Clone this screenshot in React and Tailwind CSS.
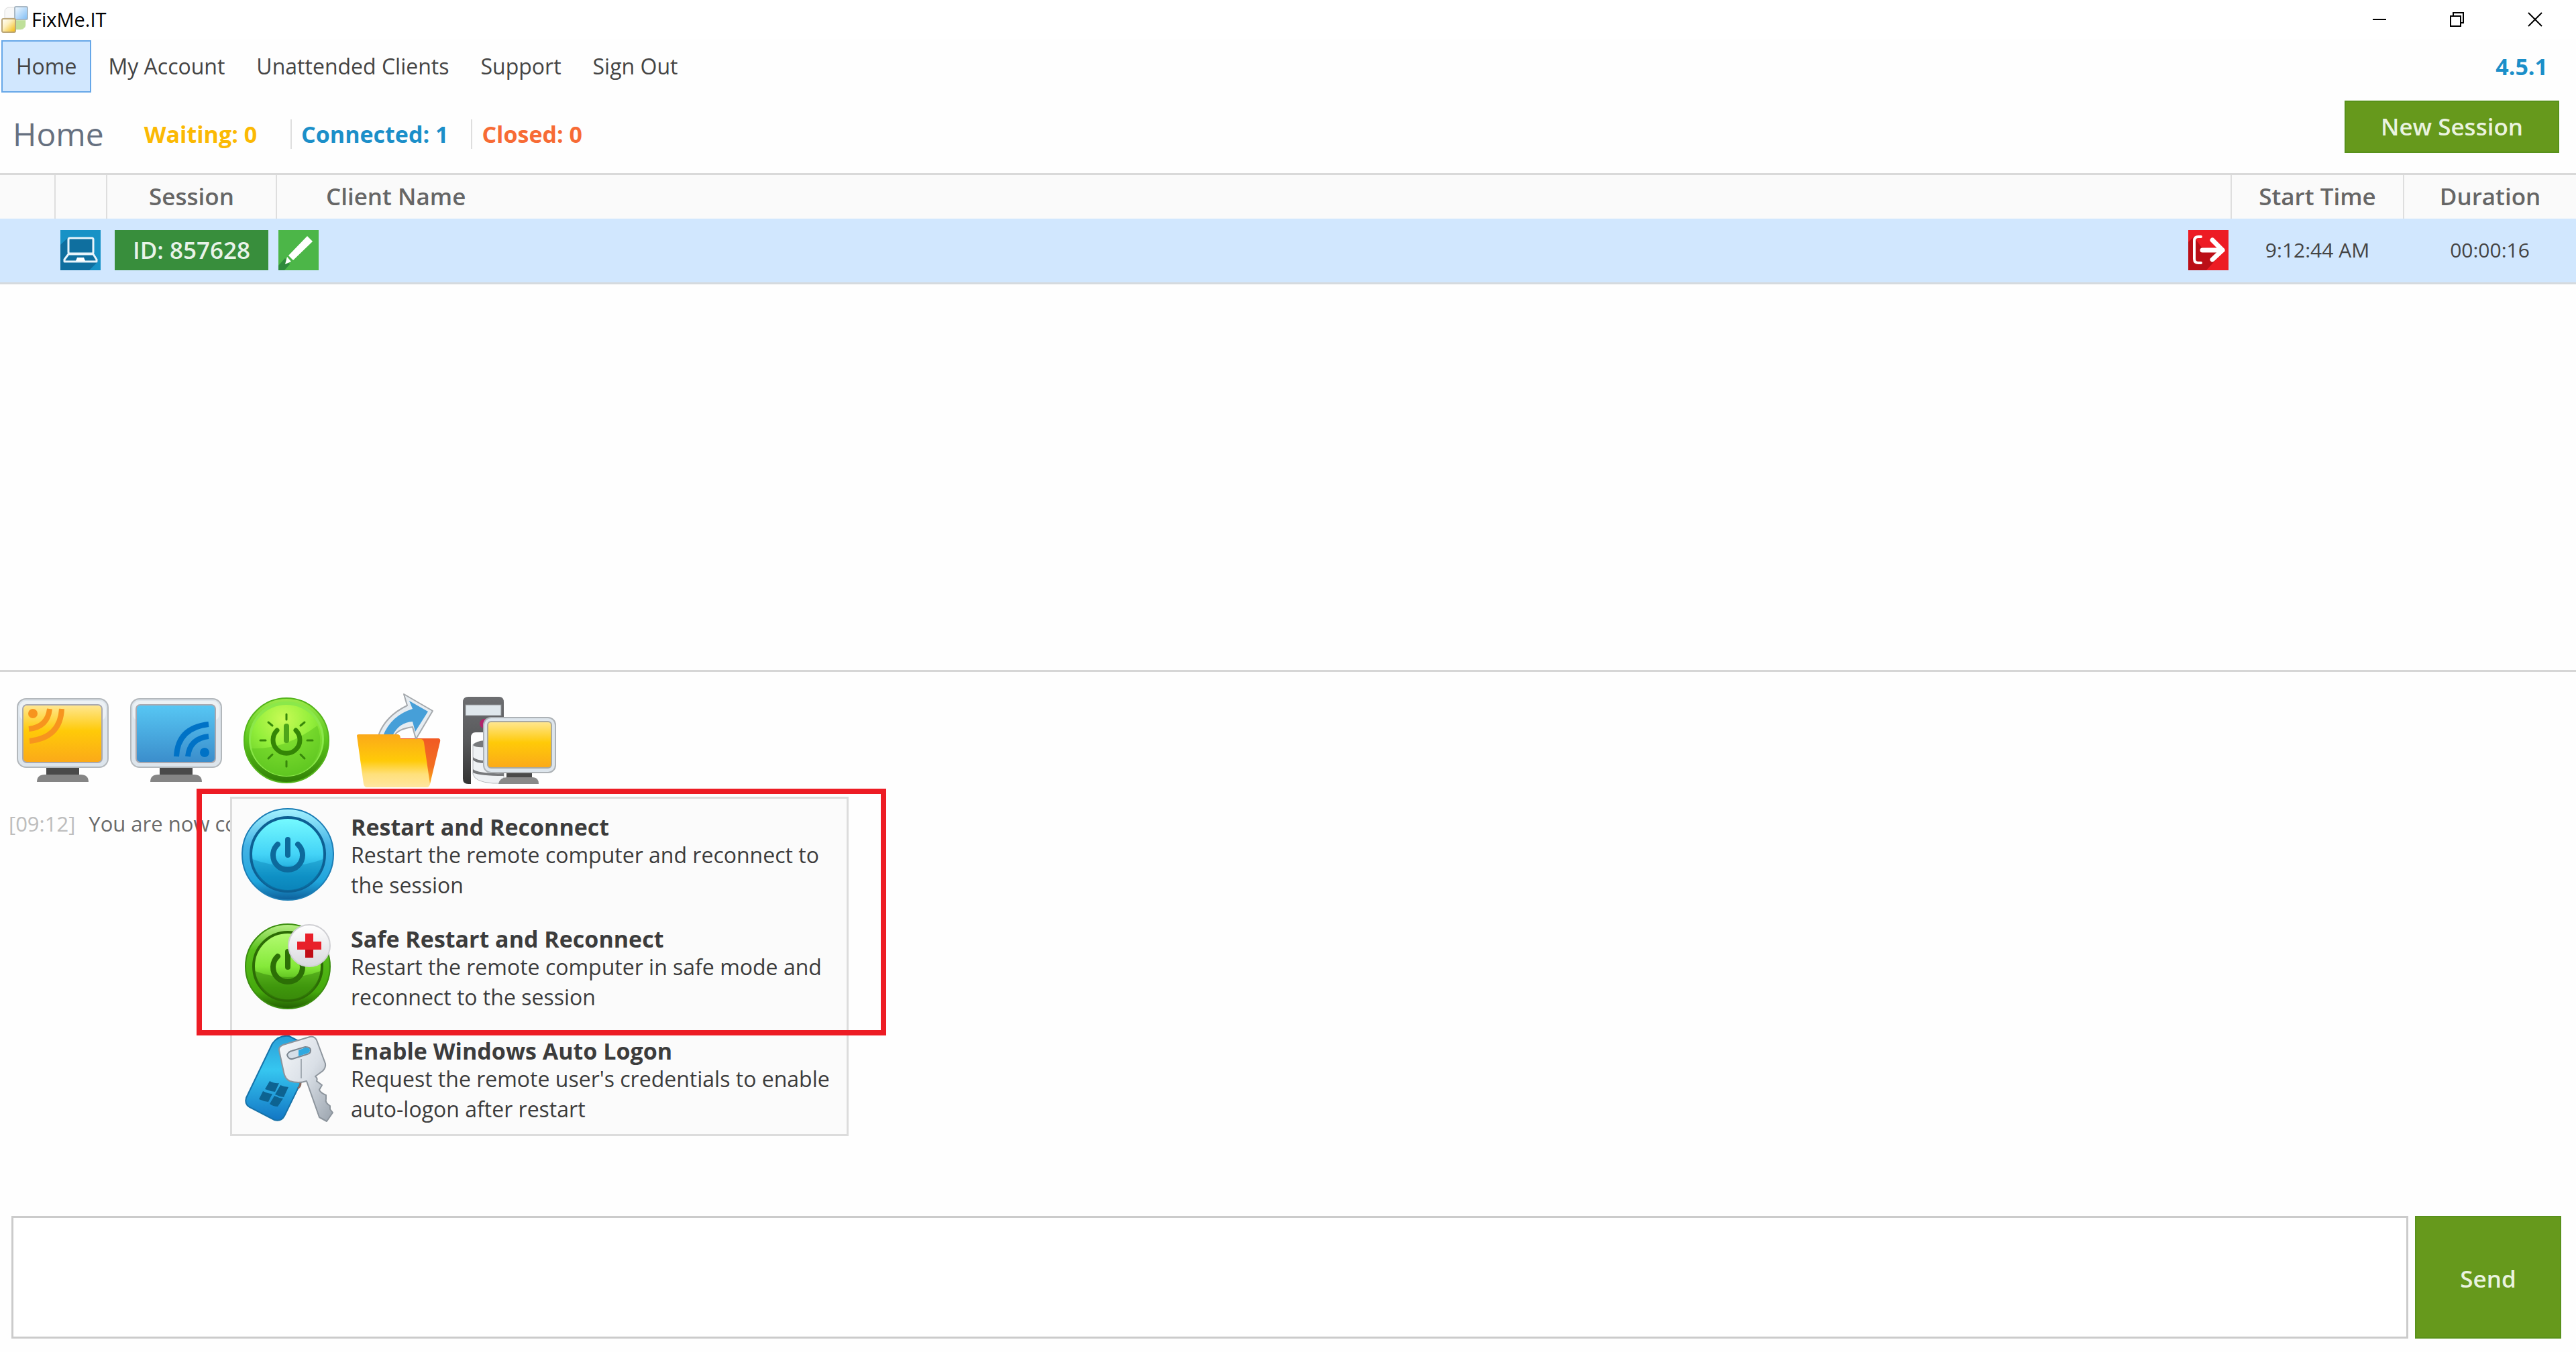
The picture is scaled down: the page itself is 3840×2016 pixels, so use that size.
import { useState } from 'react'

const menuItems = ['Home', 'My Account', 'Unattended Clients', 'Support', 'Sign Out']

const restartOptions = [
  {
    title: 'Restart and Reconnect',
    text: 'Restart the remote computer and reconnect to the session',
    icon: BluePowerIcon,
  },
  {
    title: 'Safe Restart and Reconnect',
    text: 'Restart the remote computer in safe mode and reconnect to the session',
    icon: SafePowerIcon,
  },
  {
    title: 'Enable Windows Auto Logon',
    text: "Request the remote user's credentials to enable auto-logon after restart",
    icon: KeysIcon,
  },
]

function Gradient({ id, stops, x2 = 0, y2 = 1 }) {
  return (
    <linearGradient id={id} x1="0" y1="0" x2={x2} y2={y2}>
      {stops.map(([offset, color]) => (
        <stop key={offset} offset={offset} stopColor={color} />
      ))}
    </linearGradient>
  )
}

function AppLogo() {
  return (
    <svg viewBox="0 0 40 40" className="size-10">
      <defs>
        <Gradient id="logoBlue" x2={1} stops={[[0, '#f4faff'], [1, '#7fbdf5']]} />
        <Gradient id="logoYellow" x2={1} stops={[[0, '#ffffff'], [0.4, '#fdf0c0'], [1, '#f3b705']]} />
      </defs>
      <path d="M5 18V8q0-5 6-6h9v16z" fill="#f8f8f8" stroke="#dcdcdc" />
      <path d="M21 21h15v8q-1 5-7 6h-8z" fill="#bfe09a" stroke="#d5e8c0" />
      <rect x="20" y="1" width="19" height="19" rx="2" fill="url(#logoBlue)" stroke="#a9b8c4" strokeWidth="2" />
      <rect x="1" y="19" width="20" height="20" rx="2" fill="url(#logoYellow)" stroke="#bba678" strokeWidth="2" />
    </svg>
  )
}

function LaptopIcon() {
  return (
    <svg viewBox="0 0 60 60" className="size-[60px]">
      <rect width="60" height="60" fill="#1792c6" />
      <path d="M0 22L12 11h36v20l8 16-13 13H0z" fill="#0f6f9f" />
      <rect x="12" y="12" width="37" height="23" rx="2" fill="#0f6f9f" stroke="#e9f5fb" strokeWidth="3" />
      <path d="M12 36L6 44v3h48v-3l-5-8z" fill="none" stroke="#e9f5fb" strokeWidth="3" strokeLinejoin="round" />
      <path d="M25 41h10l2 5H23z" fill="#fff" />
    </svg>
  )
}

function PencilIcon() {
  return (
    <svg viewBox="0 0 60 60" className="size-[60px]">
      <rect width="60" height="60" fill="#4cb648" />
      <path d="M10 42L0 53v7h9l8-9z" fill="#2e8b3c" />
      <path d="M43 9l8 8-29 28-7-7z" fill="#fff" />
      <path d="M13 40l6 7-9 4z" fill="#fff" />
    </svg>
  )
}

function ExitIcon() {
  return (
    <svg viewBox="0 0 60 60" className="size-[60px]">
      <rect width="60" height="60" fill="#ed1c24" />
      <path d="M0 18L8 10l12 16 34 4-27 30H0z" fill="#bb0f17" />
      <path d="M19 10h-4q-6 0-6 6v27q0 6 6 6h4" fill="none" stroke="#fff" strokeWidth="4" strokeLinecap="round" />
      <path d="M21 30h30M36 15l15 15-15 14" fill="none" stroke="#fff" strokeWidth="7" strokeLinecap="round" strokeLinejoin="round" />
    </svg>
  )
}

// Screen with its bezel and stand, shared by the toolbar icons
function Monitor({ fill }) {
  return (
    <>
      <path d="M44 103h49v13H44z" fill="#4a4a4a" />
      <path d="M30 125q0-11 12-11h53q12 0 12 11z" fill="#858585" />
      <rect x="1" y="1" width="135" height="102" rx="13" fill="#dde5ec" stroke="#b3b8bc" strokeWidth="2" />
      <rect x="4" y="4" width="129" height="30" rx="10" fill="#f7f9fa" opacity="0.6" />
      <rect x="9" y="10" width="118" height="86" rx="6" fill={fill} stroke="#a9a9b0" strokeWidth="2" />
    </>
  )
}

function ShareScreenIcon() {
  return (
    <svg viewBox="0 0 137 125" className="h-[125px] w-[137px]">
      <defs>
        <Gradient id="screenYellow" stops={[[0, '#ffe793'], [0.45, '#ffca08'], [1, '#fba919']]} />
      </defs>
      <Monitor fill="url(#screenYellow)" />
      <circle cx="24" cy="23" r="7" fill="#f7941e" />
      <path d="M18 46q28-3 31-30M19 64q46-5 48-48" fill="none" stroke="#f7941e" strokeWidth="8" />
    </svg>
  )
}

function ViewScreenIcon() {
  return (
    <svg viewBox="0 0 137 125" className="h-[125px] w-[137px]">
      <defs>
        <Gradient id="screenBlue" stops={[[0, '#57c7f4'], [1, '#3b8dcb']]} />
      </defs>
      <Monitor fill="url(#screenBlue)" />
      <circle cx="111" cy="81" r="7" fill="#0072c6" />
      <path d="M117 57q-28 3-31 30M117 39q-46 5-48 48" fill="none" stroke="#0072c6" strokeWidth="8" />
    </svg>
  )
}

function GreenPowerIcon() {
  return (
    <svg viewBox="0 0 128 128" className="size-32">
      <defs>
        <Gradient id="limeRim" stops={[[0, '#9bea4a'], [0.5, '#5cc61c'], [1, '#2f7d05']]} />
        <radialGradient id="limeFace" cx="0.45" cy="0.2" r="0.8">
          <stop offset="0" stopColor="#c9fb55" />
          <stop offset="0.5" stopColor="#93ef3b" />
          <stop offset="1" stopColor="#62c924" />
        </radialGradient>
      </defs>
      <circle cx="64" cy="64" r="63" fill="url(#limeRim)" stroke="#54b41c" strokeWidth="2" />
      <circle cx="64" cy="62" r="56" fill="#8be84a" />
      <circle cx="64" cy="64" r="53" fill="url(#limeFace)" />
      <path d="M12 76q50 2 98-34 12 32-10 60-34 26-66 5Q16 94 12 76z" fill="#5cc31e" opacity="0.5" />
      <path d="M64 43v21" stroke="#4ea51a" strokeWidth="8" strokeLinecap="round" />
      <path d="M50 49a20 20 0 1 0 28 0" fill="none" stroke="#348506" strokeWidth="7" strokeLinecap="round" />
      <path d="M64 25v8M64 95v8M25 64h8M95 64h8M37 37l6 5M91 37l-6 5M37 91l6-6M91 91l-6-6" stroke="#37880a" strokeWidth="3" strokeLinecap="round" />
    </svg>
  )
}

function FolderIcon() {
  return (
    <svg viewBox="0 0 126 142" className="h-[142px] w-[126px]">
      <defs>
        <Gradient id="folderFront" stops={[[0, '#fba919'], [0.5, '#ffca08'], [0.75, '#ffe07a'], [1, '#ffe6a0']]} />
        <Gradient id="folderBack" stops={[[0, '#f15a24'], [0.6, '#f36f21'], [1, '#fdb813']]} />
      </defs>
      <path d="M63 68h60q3 1 2 5l-15 63q-2 4-5 3z" fill="url(#folderBack)" />
      <path d="M33 64Q43 35 76 19L71 2l43 25-25 42-5-18q-22 3-27 13z" fill="#e6ecf1" stroke="#a5a9ad" strokeWidth="2" strokeLinejoin="round" />
      <path d="M40 64Q52 34 84 24l-5-12 28 16-19 30-4-15Q64 44 54 64z" fill="#469fd8" />
      <path d="M1 64q0-2 3-2h58q4 0 4 7h30q4 0 5 5l9 62q-1 5-5 5H16q-4 0-5-5z" fill="url(#folderFront)" />
    </svg>
  )
}

function ServerIcon() {
  return (
    <svg viewBox="0 0 140 132" className="h-[132px] w-[140px]">
      <defs>
        <Gradient id="tower" stops={[[0, '#6d6e71'], [0.5, '#58595b'], [1, '#333']]} />
      </defs>
      <path d="M1 9q0-8 8-8h46q7 0 7 8v45H20q-7 0-7 8v69H9q-8 0-8-8z" fill="url(#tower)" />
      <rect x="5" y="13" width="53" height="16" fill="#dfe7ec" stroke="#8b8f93" />
      <circle cx="33" cy="41" r="7" fill="#b0256b" />
      <path d="M16 72v44q2 12 30 14h16v-20H34V68q-13 0-18 4z" fill="#eef1f4" stroke="#b5b9bd" />
      <path d="M16 73q4-6 18-7v10q-14 1-18-3zM16 91q6 5 18 5v4q-14 0-18-5zM16 109q10 7 46 6v4q-36 0-46-5z" fill="#77797c" />
      <path d="M66 113h38v9H66z" fill="#4a4a4a" />
      <path d="M54 131q2-10 13-10h38q9 0 9 10z" fill="#898989" />
      <rect x="32" y="32" width="107" height="82" rx="11" fill="#dde5ec" stroke="#adb2b6" strokeWidth="2" />
      <rect x="38" y="38" width="95" height="69" rx="5" fill="url(#screenYellow)" stroke="#a9a9a0" strokeWidth="2" />
    </svg>
  )
}

function PowerSymbol({ color }) {
  return (
    <g fill="none" stroke={color} strokeWidth="8" strokeLinecap="round">
      <path d="M69 47v23" />
      <path d="M54 54a22 22 0 1 0 30 0" />
    </g>
  )
}

function BluePowerIcon() {
  return (
    <svg viewBox="0 0 138 138" className="size-[138px]">
      <defs>
        <Gradient id="blueRim" stops={[[0, '#a5f3ff'], [0.4, '#45b4e6'], [0.8, '#1fa5dc'], [1, '#0e5f9a']]} />
        <Gradient id="blueFace" stops={[[0, '#76fbff'], [0.5, '#43d3f7'], [0.8, '#129bd0'], [1, '#0b86bd']]} />
      </defs>
      <circle cx="69" cy="69" r="68" fill="url(#blueRim)" stroke="#1b7db5" strokeWidth="2" />
      <circle cx="69" cy="69" r="55" fill="url(#blueFace)" stroke="#0d6093" strokeWidth="4" />
      <path d="M16 76q53 20 106 0-6 46-53 47-46-1-53-47z" fill="#0b7fb5" opacity="0.4" />
      <PowerSymbol color="#0d6a9c" />
    </svg>
  )
}

function SafePowerIcon() {
  return (
    <svg viewBox="0 0 138 138" className="size-[138px]">
      <defs>
        <Gradient id="greenRim" stops={[[0, '#b9f088'], [0.3, '#59c01b'], [0.8, '#44a80c'], [1, '#245f02']]} />
        <Gradient id="greenFace" stops={[[0, '#b4fb72'], [0.5, '#85e93a'], [0.8, '#48a80f'], [1, '#3c8d0a']]} />
        <Gradient id="badge" stops={[[0, '#ffffff'], [1, '#d9d9de']]} />
      </defs>
      <circle cx="69" cy="69" r="63" fill="url(#greenRim)" stroke="#3b8d10" strokeWidth="2" />
      <circle cx="69" cy="69" r="51" fill="url(#greenFace)" stroke="#2c6b05" strokeWidth="4" />
      <path d="M20 76q49 18 98 0-6 42-49 43-43-1-49-43z" fill="#36860a" opacity="0.5" />
      <PowerSymbol color="#2c6f06" />
      <circle cx="101" cy="38" r="31" fill="url(#badge)" stroke="#d0d0d4" strokeWidth="2" />
      <path d="M95 20h12v12h12v12h-12v12H95V44H83V32h12z" fill="#e8202a" />
      <path d="M95 44h12v12H95z" fill="#c00d16" />
    </svg>
  )
}

function KeysIcon() {
  return (
    <svg viewBox="0 0 138 138" className="size-[138px]">
      <defs>
        <Gradient id="tag" stops={[[0, '#2a9fd8'], [0.4, '#36c6f0'], [1, '#1276c4']]} />
        <Gradient id="key" x2={1} stops={[[0, '#f7f9fb'], [0.5, '#d9dfe6'], [1, '#9aa3ad']]} />
      </defs>
      <path d="M46 17q9-13 25-11l12 6q8 8 7 20v40L64 125q-5 9-15 6L12 112q-8-5-5-14z" fill="url(#tag)" stroke="#1672a8" strokeWidth="2" />
      <path d="M42 73q8 4 14 3l-6 13q-8-1-15-4zM58 79q6 3 12 3l-7 15q-7-1-13-4zM32 88q8 4 14 4l-6 12q-8-1-14-4zM49 95q6 3 13 4l-8 12q-7 0-12-4z" fill="#0d6391" />
      <path d="M84 84q6-4 3-14" fill="none" stroke="#8a6a60" strokeWidth="3" />
      <path d="M56 27q-1-5 6-8l40-12q7-1 10 5l13 35q1 6-4 11l-11 8q4 3 2 7l8 6-4 7q1 4 10 8v6q-2 5 6 10v5l4 5-9 13-11-6-19-54q-12 4-25 0-7-3-9-13z" fill="url(#key)" stroke="#8c949c" strokeWidth="2" strokeLinejoin="round" />
      <path d="M68 34q2-5 7-6l20-6q8 0 8 5t-5 6l-22 7q-6 1-8-6z" fill="#d5dfe8" stroke="#7b8690" strokeWidth="2" />
      <path d="M85 27l10-4q7 0 7 4t-5 5l-12 4z" fill="#2fa9e0" />
      <path d="M89 40v29" stroke="#a2aab2" strokeWidth="2" />
    </svg>
  )
}

function WindowButtons() {
  return (
    <div className="flex gap-[94px] pr-[50px]">
      <button aria-label="Minimize">
        <svg viewBox="0 0 22 22" className="size-[22px]" fill="none" stroke="#000" strokeWidth="2">
          <path d="M1 11h20" />
        </svg>
      </button>
      <button aria-label="Restore">
        <svg viewBox="0 0 22 22" className="size-[22px]" fill="none" stroke="#000" strokeWidth="2">
          <path d="M1 6h15v15H1zM5 6V1h15v15h-4" />
        </svg>
      </button>
      <button aria-label="Close">
        <svg viewBox="0 0 22 22" className="size-[22px]" fill="none" stroke="#000" strokeWidth="2">
          <path d="M1 1l20 20M21 1L1 21" />
        </svg>
      </button>
    </div>
  )
}

function SessionTable() {
  return (
    <table className="w-full table-fixed border-collapse">
      <colgroup>
        <col className="w-[82px]" />
        <col className="w-[77px]" />
        <col className="w-[253px]" />
        <col />
        <col className="w-[257px]" />
        <col className="w-[257px]" />
      </colgroup>
      <thead>
        <tr className="h-[66px] border-t-3 border-[#d9d9d9] bg-[#fafafa] text-[35px] text-[#666]">
          <th aria-label="Status"></th>
          <th aria-label="Device" className="border-l-2 border-[#dedede]"></th>
          <th className="border-l-2 border-[#dedede] font-semibold">Session</th>
          <th className="border-l-2 border-[#dedede] pl-[73px] text-left font-semibold">Client Name</th>
          <th className="border-l-2 border-[#dedede] font-semibold">Start Time</th>
          <th className="border-l-2 border-[#dedede] font-semibold">Duration</th>
        </tr>
      </thead>
      <tbody>
        <tr className="h-[97px] border-b-3 border-[#d5dade] bg-[#d1e7fe] text-center text-[30px] text-[#444]">
          <td></td>
          <td className="pl-2"><LaptopIcon /></td>
          <td>
            <span className="mx-3 block bg-[#388e3c] text-center text-[35px] leading-[60px] font-semibold text-[#e8f3e8]">ID: 857628</span>
          </td>
          <td>
            <div className="flex justify-between pr-1 pl-[3px]">
              <button aria-label="Edit name"><PencilIcon /></button>
              <button aria-label="Close session"><ExitIcon /></button>
            </div>
          </td>
          <td>9:12:44 AM</td>
          <td>00:00:16</td>
        </tr>
      </tbody>
    </table>
  )
}

function RestartMenu() {
  return (
    <div className="absolute top-[148px] -left-5 z-10 flex w-[922px] flex-col gap-[29px] border-3 border-[#dcdcdc] bg-[#fbfbfb] py-[14px] text-left">
      {restartOptions.map(({ title, text, icon: Icon }) => (
        <button key={title} className="flex items-start gap-[25px] pr-4 pl-[14px] text-left">
          <span className="shrink-0"><Icon /></span>
          <span className="flex flex-col pt-[9px] text-[#3c3c3c]">
            <span className="text-[34px] leading-[38px] font-bold">{title}</span>
            <span className="leading-[45px]">{text}</span>
          </span>
        </button>
      ))}
      <div className="pointer-events-none absolute -top-[15px] -left-[53px] h-[368px] w-[1028px] border-8 border-[#ed1c24]"></div>
    </div>
  )
}

function App() {
  const [active, setActive] = useState('Home')
  const [message, setMessage] = useState('')

  return (
    <div className="flex h-screen flex-col bg-[#fefefe] font-['Open_Sans',sans-serif] text-[32px] leading-11 text-[#444]">
      <section className="flex min-h-0 flex-[125_1_0%] flex-col">
        <header className="flex h-[58px] items-center justify-between bg-white pl-[2px]">
          <div className="flex items-center gap-[5px] text-[29px] text-black">
            <AppLogo />
            <span>FixMe.IT</span>
          </div>
          <WindowButtons />
        </header>

        <div className="flex h-[82px] items-center justify-between pr-[42px] pl-[2px]">
          <nav className="flex gap-[3px]">
            {menuItems.map((item) => (
              <a
                key={item}
                href="#"
                onClick={() => setActive(item)}
                className={item === active ? 'border-2 border-[#66a7e8] bg-[#d1e7fe] px-5 leading-[74px]' : 'border-2 border-transparent px-5 leading-[74px]'}
              >
                {item}
              </a>
            ))}
          </nav>
          <span className="text-[34px] font-bold text-[#1b8fc9]">4.5.1</span>
        </div>

        <div className="flex h-[118px] items-start justify-between pr-[25px] pl-[19px]">
          <div className="flex h-[120px] items-center text-[34px] font-bold">
            <h1 className="mr-[60px] text-[48px] font-normal text-[#667080]">Home</h1>
            <span className="pr-[50px] text-[#fbb903]">Waiting: 0</span>
            <span className="border-l-2 border-[#dedede] pr-[34px] pl-[14px] text-[#1b8fc9]">Connected: 1</span>
            <span className="border-l-2 border-[#dedede] pl-[14px] text-[#f76b35]">Closed: 0</span>
          </div>
          <button className="mt-[10px] h-[78px] w-[320px] border-2 border-[#58911a] bg-[#66991c] text-[35px] font-semibold text-[#eaf3df]">New Session</button>
        </div>

        <SessionTable />
      </section>

      <section className="flex min-h-0 flex-[127_1_0%] flex-col border-t-3 border-[#d6d6d6]">
        <div className="flex h-[204px] items-center gap-8 pl-[25px]">
          <button aria-label="Share screen"><ShareScreenIcon /></button>
          <button aria-label="View screen"><ViewScreenIcon /></button>
          <div className="relative flex">
            <button aria-label="Restart options"><GreenPowerIcon /></button>
            <RestartMenu />
          </div>
          <button aria-label="Send files" className="ml-2"><FolderIcon /></button>
          <button aria-label="System info"><ServerIcon /></button>
        </div>

        <div className="flex flex-1 items-start gap-5 pl-[13px] text-[31px]">
          <span className="text-[#bdbdbd]">[09:12]</span>
          <span className="text-[#6a6a6a]">You are now connected</span>
        </div>

        <form className="flex gap-[10px] pr-[22px] pb-[20px] pl-[17px]" onSubmit={(e) => e.preventDefault()}>
          <textarea
            aria-label="Message"
            value={message}
            onChange={(e) => setMessage(e.target.value)}
            className="h-[183px] flex-1 resize-none border-3 border-[#cbcbcb] bg-white"
          />
          <button className="h-[183px] w-[218px] border-2 border-[#58911a] bg-[#66991c] pt-1 text-[35px] font-semibold text-[#eaf3df]">Send</button>
        </form>
      </section>
    </div>
  )
}

export default App
